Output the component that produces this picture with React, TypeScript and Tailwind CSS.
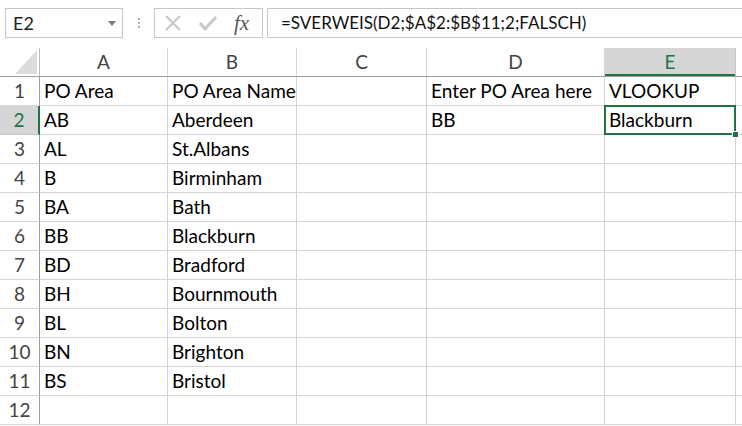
import React from "react";

const cols = ["A", "B", "C", "D", "E"];
const widths = ["w-[128px]", "w-[129px]", "w-[130px]", "w-[178px]", "w-[131px]"];

const data: string[][] = [
  ["PO Area", "PO Area Name", "", "Enter PO Area here", "VLOOKUP"],
  ["AB", "Aberdeen", "", "BB", "Blackburn"],
  ["AL", "St.Albans", "", "", ""],
  ["B", "Birminham", "", "", ""],
  ["BA", "Bath", "", "", ""],
  ["BB", "Blackburn", "", "", ""],
  ["BD", "Bradford", "", "", ""],
  ["BH", "Bournmouth", "", "", ""],
  ["BL", "Bolton", "", "", ""],
  ["BN", "Brighton", "", "", ""],
  ["BS", "Bristol", "", "", ""],
  ["", "", "", "", ""],
];

export default function App() {
  return (
    <div
      className="w-[742px] h-[426px] bg-white overflow-hidden text-[#000]"
      style={{ fontFamily: "Lato, 'Open Sans', sans-serif" }}
    >
      {/* formula bar */}
      <div className="h-[48px] flex items-start pt-[8px] relative">
        <div className="ml-[5px] w-[118px] h-[30px] border border-[#c6c6c6] flex items-center pl-[7px] pr-[6px] text-[18px] text-[#222]">
          <span className="flex-1">E2</span>
          <svg width="8" height="5" viewBox="0 0 8 5">
            <path d="M0 0 L8 0 L4 5 Z" fill="#7a7a7a" />
          </svg>
        </div>
        <div className="w-[31px] h-[30px] flex flex-col items-center justify-center gap-[2px]">
          <div className="w-[2px] h-[2px] bg-[#b0b0b0]" />
          <div className="w-[2px] h-[2px] bg-[#b0b0b0]" />
          <div className="w-[2px] h-[2px] bg-[#b0b0b0]" />
        </div>
        <div className="w-[109px] h-[30px] border border-[#c6c6c6] flex items-center">
          <svg width="18" height="18" viewBox="0 0 18 18" className="ml-[9px]">
            <path d="M2 2 L16 16 M16 2 L2 16" stroke="#c8c8c8" strokeWidth="2.2" />
          </svg>
          <svg width="20" height="16" viewBox="0 0 20 16" className="ml-[16px]">
            <path d="M2 8 L7 14 L18 2" stroke="#c8c8c8" strokeWidth="3" fill="none" />
          </svg>
          <span
            className="ml-[16px] text-[21px] italic text-[#555] leading-none"
            style={{ fontFamily: "'Liberation Serif', serif" }}
          >
            fx
          </span>
        </div>
        <div className="ml-[4px] flex-1 h-[30px] border-y border-l border-[#c6c6c6] flex items-center pl-[13px] text-[17px] text-[#111]">
          =SVERWEIS(D2;$A$2:$B$11;2;FALSCH)
        </div>
      </div>

      {/* header row */}
      <div className="flex h-[29px] border-b border-[#9e9e9e]">
        <div className="w-[40px] h-full border-r border-[#bdbdbd] relative">
          <svg width="22" height="24" viewBox="0 0 22 24" className="absolute left-[15px] top-[2px]">
            <path d="M22 0 L22 24 L0 24 Z" fill="#dcdcdc" />
          </svg>
        </div>
        {cols.map((c, i) => (
          <div
            key={c}
            className={`${widths[i]} h-full flex items-center justify-center pt-[1px] text-[19px] border-r ${
              c === "E"
                ? "bg-[#d6d6d6] text-[#217346] border-[#c6c6c6] shadow-[inset_0_-2px_0_#217346]"
                : "text-[#444] border-[#d8d8d8]"
            }`}
          >
            {c}
          </div>
        ))}
        <div className="flex-1" />
      </div>

      {/* rows */}
      {data.map((row, r) => (
        <div key={r} className="flex h-[29px]">
          <div
            className={`w-[40px] h-full flex items-center justify-center pt-[1px] text-[19px] border-b border-r ${
              r === 1
                ? "bg-[#d6d6d6] text-[#217346] border-r-[#217346] border-r-2 border-b-[#c6c6c6]"
                : "text-[#444] border-b-[#d8d8d8] border-r-[#9e9e9e]"
            }`}
          >
            {r + 1}
          </div>
          {row.map((v, c) => (
            <div
              key={c}
              className={`${widths[c]} h-full border-r border-b border-[#d4d4d4] flex items-center pl-[4px] pt-[1px] text-[19px] whitespace-nowrap relative`}
            >
              {v}
              {r === 1 && c === 4 && (
                <>
                  <div className="absolute left-[-1px] top-[-1px] right-[-1px] bottom-[-1px] border-2 border-[#217346] pointer-events-none" />
                  <div className="absolute right-[-4px] bottom-[-4px] w-[7px] h-[7px] bg-[#217346] border border-white z-10" />
                </>
              )}
            </div>
          ))}
          <div className="flex-1 h-full border-b border-[#d4d4d4]" />
        </div>
      ))}
    </div>
  );
}
